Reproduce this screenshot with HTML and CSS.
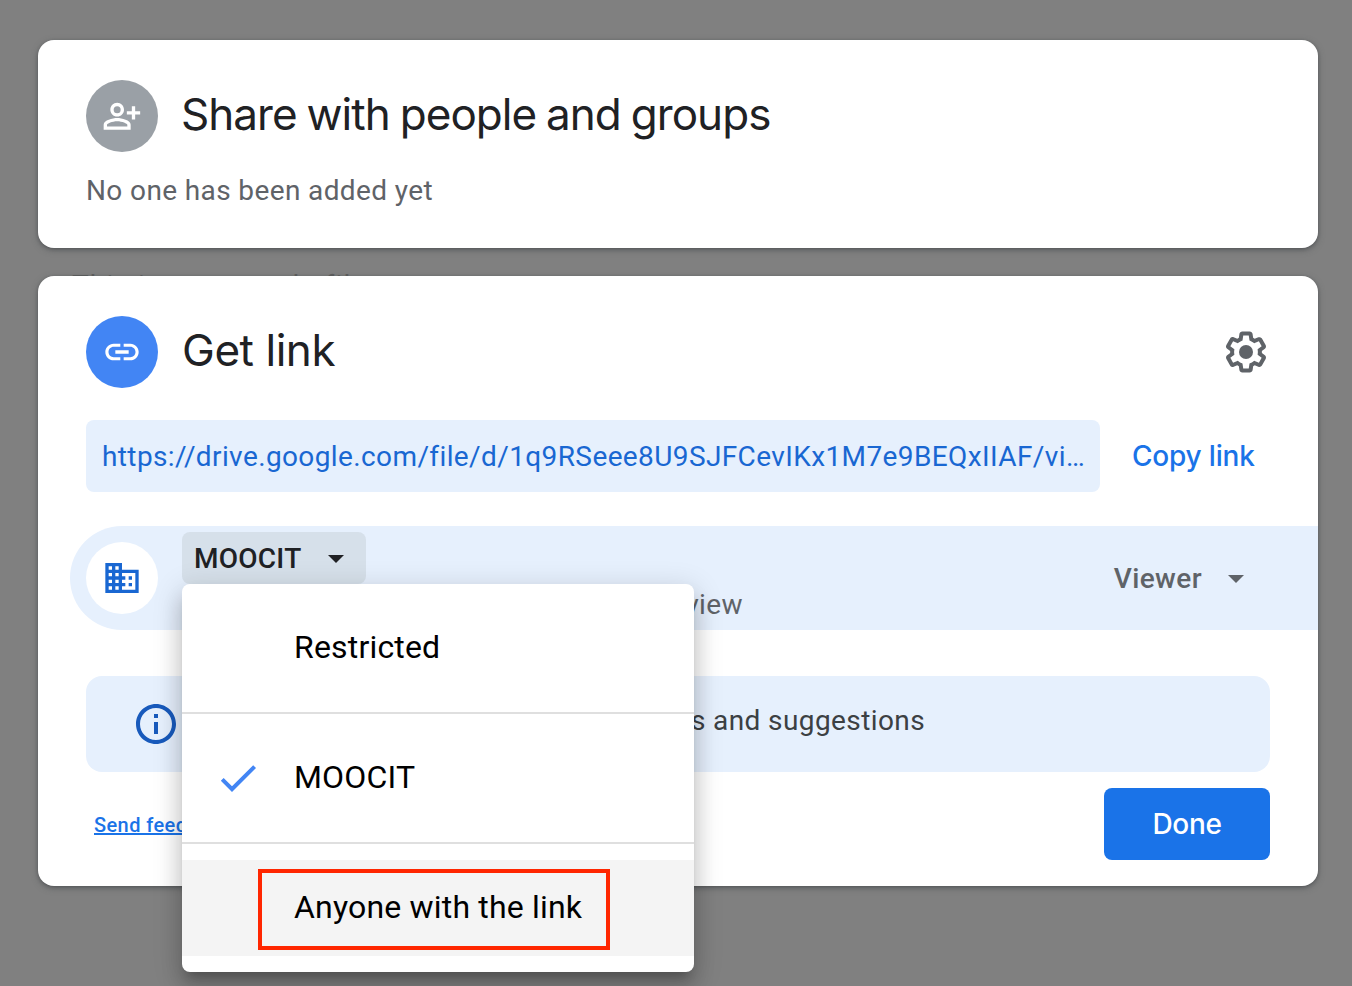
FILE: index.html
```html
<!DOCTYPE html>
<html lang="en">
<head>
<meta charset="utf-8">
<title>Share with people and groups</title>
<link rel="stylesheet" href="styles.css">
</head>
<body>
<main class="dialog">
  <section class="card card-people">
    <header class="card-header">
      <span class="badge badge-gray">
        <svg class="icon-40" viewBox="2.9 -0.2 24 24" fill="#fff"><path d="M12 5.9a2.1 2.1 0 110 4.2 2.1 2.1 0 010-4.2M12 3.9C9.7 3.9 7.9 5.79 7.9 8s1.8 4.1 4.1 4.1 4.1-1.8 4.1-4.1-1.8-4.1-4.1-4.1zM12 13c-2.67 0-8.1 1.34-8.1 4v3h16.2v-3c0-2.66-5.43-4-8.1-4zm6.1 5.1H5.9V17c0-.64 3.13-2.1 6.1-2.1s6.1 1.46 6.1 2.1v1.1zM20.8 5.9h2v3h3v2h-3v3h-2v-3h-3v-2h3z"/></svg>
      </span>
      <h1 class="title title-share">Share with people and groups</h1>
    </header>
    <p class="empty-note">No one has been added yet</p>
  </section>

  <div class="backdrop-strip"><span class="backdrop-text">This is my sample file</span></div>

  <section class="card card-link">
    <header class="card-header">
      <span class="badge badge-blue">
        <svg class="icon-40" viewBox="0 0 24 24" fill="#fff"><path d="M3.9 12c0-1.71 1.39-3.1 3.1-3.1h4V7H7c-2.76 0-5 2.24-5 5s2.24 5 5 5h4v-1.9H7c-1.71 0-3.1-1.39-3.1-3.1zM8 13h8v-2H8v2zm9-6h-4v1.9h4c1.71 0 3.1 1.39 3.1 3.1s-1.39 3.1-3.1 3.1h-4V17h4c2.76 0 5-2.24 5-5s-2.24-5-5-5z"/></svg>
      </span>
      <h2 class="title title-link">Get link</h2>
      <svg class="icon-48 gear" viewBox="0 0 24 24" fill="#5f6368"><path d="M13.85 22.25h-3.7c-.74 0-1.36-.54-1.45-1.27l-.27-1.89c-.27-.14-.53-.29-.79-.46l-1.8.72c-.7.26-1.47-.03-1.81-.65L2.2 15.53c-.35-.66-.2-1.44.36-1.88l1.53-1.19c-.01-.15-.02-.3-.02-.46 0-.15.01-.31.02-.46l-1.52-1.19c-.59-.45-.74-1.26-.37-1.88l1.85-3.19c.34-.62 1.11-.9 1.79-.63l1.81.73c.26-.17.52-.32.78-.46l.27-1.91c.09-.7.71-1.25 1.44-1.25h3.7c.74 0 1.36.54 1.45 1.27l.27 1.89c.27.14.53.29.79.46l1.8-.72c.71-.26 1.48.03 1.82.65l1.84 3.18c.36.66.2 1.44-.36 1.88l-1.52 1.19c.01.15.02.3.02.46s-.01.31-.02.46l1.52 1.19c.56.45.72 1.23.37 1.86l-1.86 3.22c-.34.62-1.11.9-1.8.63l-1.8-.72c-.26.17-.52.32-.78.46l-.27 1.91c-.1.68-.72 1.22-1.46 1.22zm-3.23-2h2.76l.37-2.55.53-.22c.44-.18.88-.44 1.34-.78l.45-.34 2.38.96 1.38-2.4-2.03-1.58.07-.56c.03-.26.06-.51.06-.78s-.03-.53-.06-.78l-.07-.56 2.03-1.58-1.39-2.4-2.39.96-.45-.35c-.42-.32-.87-.58-1.33-.77l-.52-.22-.37-2.55h-2.76l-.37 2.55-.53.21c-.44.19-.88.44-1.34.79l-.45.33-2.38-.95-1.39 2.39 2.03 1.58-.07.56a7 7 0 0 0-.06.79c0 .26.02.53.06.78l.07.56-2.03 1.58 1.38 2.4 2.39-.96.45.35c.43.33.86.58 1.33.77l.53.22.38 2.55z"/><circle cx="12" cy="12" r="3.5"/></svg>
    </header>

    <div class="url-row">
      <div class="url-box"><span class="url">https://drive.google.com/file/d/1q9RSeee8U9SJFCevIKx1M7e9BEQxIIAF/vi…</span></div>
      <span class="copy">Copy link</span>
    </div>

    <div class="access">
      <span class="badge badge-white">
        <svg class="icon-40" viewBox="0 0 24 24" fill="#1967d2"><path d="M12 7V3H2v18h20V7H12zM6 19H4v-2h2v2zm0-4H4v-2h2v2zm0-4H4V9h2v2zm0-4H4V5h2v2zm4 12H8v-2h2v2zm0-4H8v-2h2v2zm0-4H8V9h2v2zm0-4H8V5h2v2zm10 12h-8v-2h2v-2h-2v-2h2v-2h-2V9h8v10zm-2-8h-2v2h2v-2zm0 4h-2v2h2v-2z"/></svg>
      </span>
      <div class="audience">
        <div class="audience-button"><span class="audience-name">MOOCIT</span><svg class="caret" viewBox="0 0 14 7" fill="#202124"><path d="M0 0h14L7 7z"/></svg></div>
        <p class="audience-note">Anyone in this group with this link can view</p>
        <div class="menu">
          <div class="menu-item"><span class="menu-mark"></span><span class="menu-label">Restricted</span></div>
          <div class="menu-divider"></div>
          <div class="menu-item"><span class="menu-mark"><svg class="icon-48" viewBox="0 0 24 24" fill="#4285f4"><path d="M9 16.17L4.83 12l-1.42 1.41L9 19 21 7l-1.41-1.41z"/></svg></span><span class="menu-label">MOOCIT</span></div>
          <div class="menu-divider"></div>
          <div class="menu-item menu-item-hover"><span class="menu-mark"></span><span class="menu-label">Anyone with the link</span><span class="highlight"></span></div>
        </div>
      </div>
      <div class="role"><span class="role-name">Viewer</span><svg class="caret" viewBox="0 0 14 7" fill="#5f6368"><path d="M0 0h14L7 7z"/></svg></div>
    </div>

    <div class="info">
      <svg class="icon-48" viewBox="0 0 24 24" fill="#185abc"><path d="M11 7h2v2h-2V7zm0 4h2v6h-2v-6zm1-9C6.48 2 2 6.48 2 12s4.48 10 10 10 10-4.48 10-10S17.52 2 12 2zm0 18c-4.41 0-8-3.59-8-8s3.59-8 8-8 8 3.59 8 8-3.59 8-8 8z"/></svg>
      <p class="info-text">Viewers of this file can see comments and suggestions</p>
    </div>

    <footer class="card-footer">
      <a class="feedback">Send feedback</a>
      <div class="done"><span class="done-label">Done</span></div>
    </footer>
  </section>
</main>
</body>
</html>
```
FILE: styles.css
```css
* { box-sizing: border-box; }

body {
  margin: 0;
  height: 986px;
  overflow: hidden;
  background: #808080;
  font-family: Roboto, sans-serif;
  font-size: 28px;
  color: #202124;
}

h1, h2, p { margin: 0; font-weight: 400; }
svg { display: block; flex: none; }
.icon-40 { width: 40px; height: 40px; }
.icon-48 { width: 48px; height: 48px; }

.dialog {
  width: 1280px;
  margin-left: 38px;
  padding-top: 40px;
}

.card {
  background: #fff;
  border-radius: 16px;
  padding: 40px 48px 0;
  box-shadow: 0 2px 6px rgba(60, 64, 67, .5), 0 1px 3px rgba(60, 64, 67, .35);
}
.card-people { height: 208px; }
.card-link { height: 610px; position: relative; }

.card-header { display: flex; align-items: center; height: 72px; }
.badge {
  flex: none;
  width: 72px;
  height: 72px;
  border-radius: 50%;
  display: flex;
  align-items: center;
  justify-content: center;
}
.badge-gray { background: #9aa0a6; }
.badge-blue { background: #4285f4; }
.badge-white { background: #fff; }

.title {
  font-family: Inter, sans-serif;
  font-size: 44px;
  line-height: 56px;
  padding-bottom: 4px;
  margin-left: 24px;
  white-space: nowrap;
}
.title-share { margin-left: 23px; letter-spacing: -.96px; word-spacing: -1.5px; }
.title-link { letter-spacing: -.45px; }
.gear { margin-left: auto; }

.empty-note {
  margin-top: 19px;
  line-height: 40px;
  letter-spacing: .38px;
  color: #5f6368;
}

.backdrop-strip { height: 28px; padding: 21px 0 0 34px; }
.backdrop-text { display: block; font-size: 28px; line-height: 34px; color: #606060; white-space: nowrap; letter-spacing: 1.15px; }

.url-row { display: flex; align-items: center; margin-top: 32px; height: 72px; }
.url-box {
  width: 1014px;
  height: 72px;
  padding: 1px 16px 0;
  border-radius: 8px;
  background: #e6f0fd;
  color: #1967d2;
  line-height: 72px;
  white-space: nowrap;
}
.url { letter-spacing: .39px; }
.copy {
  margin-left: 32px;
  font-family: Inter, sans-serif;
  font-weight: 500;
  letter-spacing: -.2px;
  color: #1a73e8;
  white-space: nowrap;
}

.access {
  display: flex;
  align-items: center;
  height: 104px;
  margin: 34px -48px 0 -16px;
  padding: 0 74px 0 16px;
  border-radius: 52px 0 0 52px;
  background: #e6f0fd;
}
.audience { position: relative; height: 104px; width: 560px; margin-left: 24px; padding-top: 6px; }
.audience-button {
  display: flex;
  align-items: center;
  justify-content: space-between;
  width: 184px;
  height: 52px;
  padding: 0 22px 0 12px;
  border-radius: 8px;
  background: #d6e0ea;
  font-weight: 500;
  letter-spacing: .25px;
}
.caret { width: 16px; height: 8px; margin-top: 1px; }
.audience-note { padding-top: 1px; line-height: 40px; width: 561px; text-align: right; white-space: nowrap; color: #5f6368; letter-spacing: .4px; }
.role { margin-left: auto; display: flex; align-items: center; gap: 26px; font-weight: 500; letter-spacing: .4px; color: #5f6368; }

.menu {
  position: absolute;
  z-index: 2;
  left: 0;
  top: 58px;
  width: 512px;
  height: 388px;
  padding: 16px 0;
  border-radius: 8px;
  background: #fff;
  color: #000;
  font-size: 32px;
  box-shadow: 0 10px 10px -6px rgba(0, 0, 0, .2), 0 16px 20px 2px rgba(0, 0, 0, .14), 0 6px 28px 4px rgba(0, 0, 0, .12);
}
.menu-item { position: relative; display: flex; align-items: center; height: 96px; white-space: nowrap; }
.menu-item-hover { background: #f4f4f4; }
.menu-mark { flex: none; width: 112px; padding-left: 32px; }
.menu-label { padding-bottom: 3px; letter-spacing: .18px; }
.menu-divider { height: 2px; margin: 16px 0; background: #dfdfdf; }
.highlight {
  position: absolute;
  left: 76px;
  top: 9px;
  width: 352px;
  height: 81px;
  border: 4px solid #ff2600;
}

.info {
  display: flex;
  align-items: center;
  height: 96px;
  margin-top: 46px;
  padding-left: 46px;
  border-radius: 16px;
  background: #e6f0fd;
}
.info-text { width: 745px; padding-bottom: 8px; text-align: right; color: #3c4043; letter-spacing: .4px; }

.card-footer { display: flex; align-items: center; justify-content: space-between; height: 72px; margin-top: 16px; padding-left: 8px; }
.feedback {
  padding-top: 2px;
  font-size: 20px;
  font-weight: 500;
  letter-spacing: .4px;
  color: #1a73e8;
  text-decoration: underline;
  text-decoration-thickness: 2px;
}
.done {
  width: 166px;
  height: 72px;
  border-radius: 8px;
  background: #1a73e8;
  color: #fff;
  font-family: Inter, sans-serif;
  font-weight: 500;
  letter-spacing: -.3px;
  line-height: 72px;
  text-align: center;
}
```
